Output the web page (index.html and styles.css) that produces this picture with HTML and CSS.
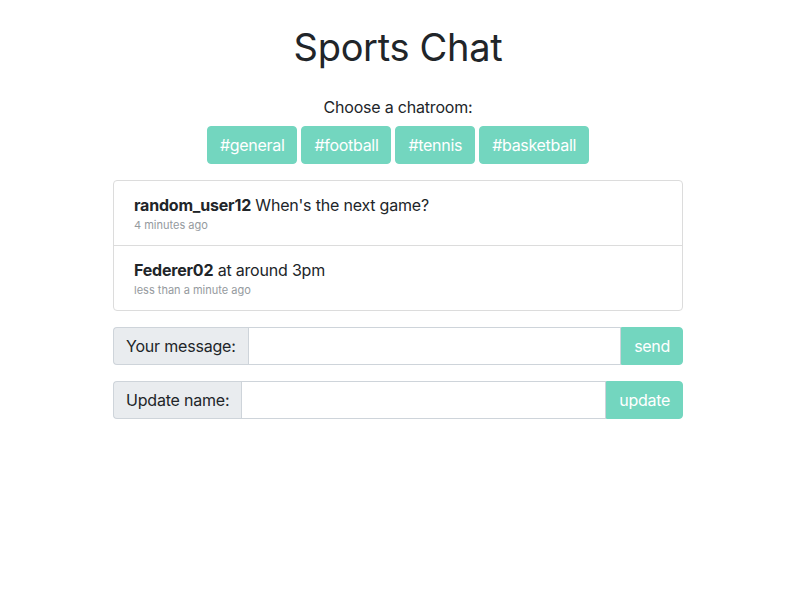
FILE: index.html
```html
<!DOCTYPE html>
<html>
<head>
<meta charset="utf-8">
<link rel="stylesheet" href="styles.css">
</head>
<body>
<div class="container">
  <h1 class="title">Sports Chat</h1>
  <p class="choose">Choose a chatroom:</p>
  <div class="rooms">
    <button class="btn">#general</button>
    <button class="btn">#football</button>
    <button class="btn">#tennis</button>
    <button class="btn">#basketball</button>
  </div>
  <ul class="list">
    <li class="item">
      <div class="msg"><b>random_user12</b> When's the next game?</div>
      <div class="time">4 minutes ago</div>
    </li>
    <li class="item">
      <div class="msg"><b>Federer02</b> at around 3pm</div>
      <div class="time">less than a minute ago</div>
    </li>
  </ul>
  <form class="group">
    <span class="label">Your message:</span>
    <input class="field" type="text">
    <button class="btn btn-side" type="button">send</button>
  </form>
  <form class="group">
    <span class="label">Update name:</span>
    <input class="field" type="text">
    <button class="btn btn-side" type="button">update</button>
  </form>
</div>
</body>
</html>
```
FILE: styles.css
```css
* { box-sizing: border-box; }
body {
  margin: 0;
  font-family: Inter, "Liberation Sans", sans-serif;
  font-size: 16px;
  line-height: 1.5;
  letter-spacing: -0.2px;
  color: #212529;
  background: #fff;
}
.container {
  width: 570px;
  margin: 0 0 0 calc(50% - 287px);
  padding-top: 23px;
}
.title {
  margin: 0 0 24px;
  font-size: 38px;
  font-weight: 400;
  line-height: 48px;
  letter-spacing: -0.3px;
  text-align: center;
}
.choose {
  margin: 0 0 7px;
  text-align: center;
}
.rooms {
  display: flex;
  justify-content: center;
  gap: 4px;
}
.btn {
  font-family: inherit;
  font-size: 16px;
  letter-spacing: -0.3px;
  line-height: 24px;
  padding: 6px 12px;
  border: 1px solid #73d6bf;
  border-radius: 4px;
  background: #73d6bf;
  color: #fff;
  cursor: pointer;
}
.list {
  list-style: none;
  margin: 16px 0 0;
  padding: 0;
  border: 1px solid #dcdcdc;
  border-radius: 4px;
}
.item {
  padding: 12px 20px 11px;
}
.item + .item { border-top: 1px solid #dcdcdc; }
.msg b { font-weight: 700; }
.time {
  font-size: 11px;
  line-height: 17px;
  letter-spacing: 0;
  color: #959a9e;
}
.group {
  display: flex;
  margin: 16px 0 0;
  height: 38px;
}
.label {
  display: flex;
  align-items: center;
  padding: 0 12px;
  background: #e9ecef;
  border: 1px solid #ced4da;
  border-right: 0;
  border-radius: 4px 0 0 4px;
  color: #212529;
}
.field {
  flex: 1;
  min-width: 0;
  border: 1px solid #ced4da;
  padding: 6px 12px;
  font: inherit;
}
.btn-side {
  border-radius: 0 4px 4px 0;
}
```
